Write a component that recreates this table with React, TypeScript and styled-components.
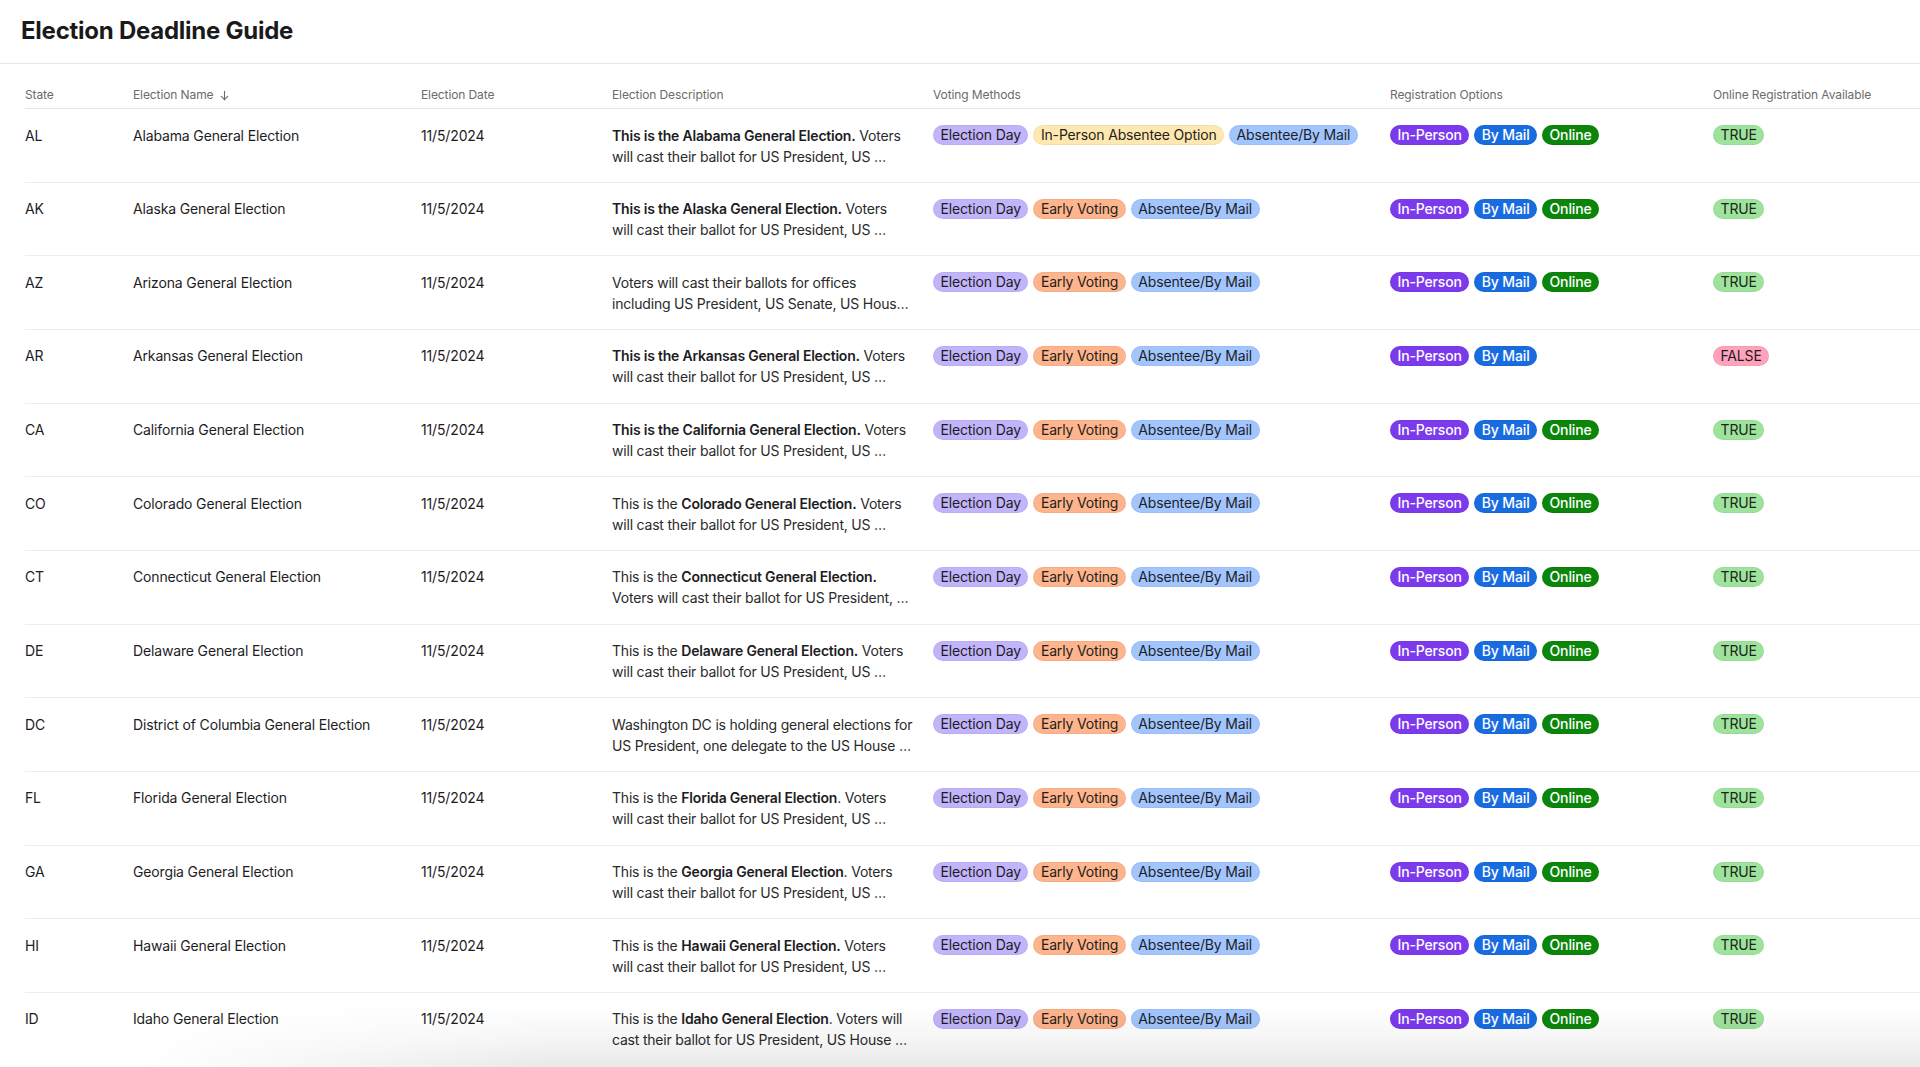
import React from "react";
import styled, { createGlobalStyle } from "styled-components";

const GlobalStyle = createGlobalStyle`
  html, body {
    margin: 0;
    padding: 0;
    background: #ffffff;
    overflow: hidden;
  }
  body {
    font-family: Inter, "Noto Sans", "Liberation Sans", sans-serif;
    color: #1d1d1f;
    -webkit-font-smoothing: antialiased;
  }
  * { box-sizing: border-box; }
`;

const Page = styled.div`
  width: 1920px;
  height: 1067px;
  overflow: hidden;
  position: relative;
  background: #fff;
`;

const TitleBar = styled.header`
  height: 64px;
  padding: 17px 21px 0;
  border-bottom: 1px solid #e6e6e6;
`;

const Title = styled.h1`
  margin: 0;
  font-size: 24px;
  line-height: 28px;
  font-weight: 700;
  letter-spacing: -0.25px;
  color: #1a1a1a;
`;

const Table = styled.div`
  margin: 20px 0 0 25px;
`;

const cols = "108px 288px 191px 321px 457px 323px 1fr";

const HeaderRow = styled.div`
  display: grid;
  grid-template-columns: ${cols};
  padding: 3px 0 5px;
  border-bottom: 1px solid #e6e6e6;
`;

const HeaderCell = styled.div`
  display: flex;
  align-items: center;
  gap: 6px;
  font-size: 12px;
  line-height: 16px;
  letter-spacing: -0.1px;
  color: #6b6b6b;
`;

const Row = styled.div`
  display: grid;
  grid-template-columns: ${cols};
  padding: 15.5px 0 15.17px;
  border-bottom: 1px solid #ececec;
  &:last-child {
    border-bottom-color: transparent;
  }
`;

const Cell = styled.div`
  font-size: 14px;
  line-height: 21px;
  letter-spacing: -0.15px;
  color: #1d1d1f;
  padding-right: 6px;
`;

const DescLine = styled.div`
  white-space: nowrap;
  font-size: 14px;
  line-height: 21px;
  letter-spacing: -0.2px;
  color: #2a2a2a;
`;

const Strong = styled.b`
  font-weight: 600;
  color: #1d1d1f;
`;

const PillGroup = styled.div`
  display: flex;
  flex-wrap: wrap;
  gap: 5px;
  padding-top: 0.5px;
`;

const Pill = styled.span<{ $bg: string; $fg: string; $weight?: number }>`
  display: inline-flex;
  align-items: center;
  height: 20px;
  padding: 0 7.5px;
  border-radius: 10px;
  background: ${(p) => p.$bg};
  color: ${(p) => p.$fg};
  font-size: 14px;
  line-height: 20px;
  letter-spacing: -0.15px;
  font-weight: ${(p) => p.$weight ?? 400};
  box-shadow: inset 0 0 0 1px rgba(0, 0, 0, 0.04);
  white-space: nowrap;
`;

const BottomFade = styled.div`
  position: fixed;
  left: 0;
  right: 0;
  bottom: 0;
  height: 62px;
  pointer-events: none;
  background: linear-gradient(to bottom, rgba(0, 0, 0, 0) 0%, rgba(0, 0, 0, 0.04) 55%, rgba(0, 0, 0, 0.09) 100%);
  -webkit-mask-image: linear-gradient(to right, transparent 130px, #000 560px);
  mask-image: linear-gradient(to right, transparent 130px, #000 560px);
`;

const SortArrow = () => (
  <svg width="11" height="11" viewBox="0 0 12 12" fill="none" stroke="#6b6b6b" strokeWidth="1.2" strokeLinecap="round" strokeLinejoin="round">
    <path d="M6 1.5v9" />
    <path d="M2.5 7l3.5 3.5L9.5 7" />
  </svg>
);

type PillKind =
  | "Election Day"
  | "Early Voting"
  | "In-Person Absentee Option"
  | "Absentee/By Mail"
  | "In-Person"
  | "By Mail"
  | "Online"
  | "TRUE"
  | "FALSE";

const pillStyles: Record<PillKind, { bg: string; fg: string; weight?: number }> = {
  "Election Day": { bg: "#c2b4fb", fg: "#1c1c22" },
  "Early Voting": { bg: "#feb48d", fg: "#241e1a" },
  "In-Person Absentee Option": { bg: "#fee8b2", fg: "#24211a" },
  "Absentee/By Mail": { bg: "#a3c5fd", fg: "#1a1f2a" },
  "In-Person": { bg: "#7c3aed", fg: "#ffffff", weight: 500 },
  "By Mail": { bg: "#186ce0", fg: "#ffffff", weight: 500 },
  Online: { bg: "#0b860b", fg: "#ffffff", weight: 500 },
  TRUE: { bg: "#9ee39c", fg: "#1c241c" },
  FALSE: { bg: "#ffa3bc", fg: "#241c1e" },
};

const Tag = ({ kind }: { kind: PillKind }) => {
  const s = pillStyles[kind];
  return (
    <Pill $bg={s.bg} $fg={s.fg} $weight={s.weight}>
      {kind}
    </Pill>
  );
};

type Seg = string | { b: string };

interface Election {
  state: string;
  name: string;
  l1: Seg[];
  l2: string;
  methods: PillKind[];
  reg: PillKind[];
  online: PillKind;
}

const std: PillKind[] = ["Election Day", "Early Voting", "Absentee/By Mail"];
const regAll: PillKind[] = ["In-Person", "By Mail", "Online"];
const l2std = "will cast their ballot for US President, US …";

const data: Election[] = [
  { state: "AL", name: "Alabama General Election", l1: [{ b: "This is the Alabama General Election." }, " Voters"], l2: l2std, methods: ["Election Day", "In-Person Absentee Option", "Absentee/By Mail"], reg: regAll, online: "TRUE" },
  { state: "AK", name: "Alaska General Election", l1: [{ b: "This is the Alaska General Election." }, " Voters"], l2: l2std, methods: std, reg: regAll, online: "TRUE" },
  { state: "AZ", name: "Arizona General Election", l1: ["Voters will cast their ballots for offices"], l2: "including US President, US Senate, US Hous…", methods: std, reg: regAll, online: "TRUE" },
  { state: "AR", name: "Arkansas General Election", l1: [{ b: "This is the Arkansas General Election." }, " Voters"], l2: l2std, methods: std, reg: ["In-Person", "By Mail"], online: "FALSE" },
  { state: "CA", name: "California General Election", l1: [{ b: "This is the California General Election." }, " Voters"], l2: l2std, methods: std, reg: regAll, online: "TRUE" },
  { state: "CO", name: "Colorado General Election", l1: ["This is the ", { b: "Colorado General Election." }, " Voters"], l2: l2std, methods: std, reg: regAll, online: "TRUE" },
  { state: "CT", name: "Connecticut General Election", l1: ["This is the ", { b: "Connecticut General Election." }], l2: "Voters will cast their ballot for US President, …", methods: std, reg: regAll, online: "TRUE" },
  { state: "DE", name: "Delaware General Election", l1: ["This is the ", { b: "Delaware General Election." }, " Voters"], l2: l2std, methods: std, reg: regAll, online: "TRUE" },
  { state: "DC", name: "District of Columbia General Election", l1: ["Washington DC is holding general elections for"], l2: "US President, one delegate to the US House …", methods: std, reg: regAll, online: "TRUE" },
  { state: "FL", name: "Florida General Election", l1: ["This is the ", { b: "Florida General Election" }, ". Voters"], l2: l2std, methods: std, reg: regAll, online: "TRUE" },
  { state: "GA", name: "Georgia General Election", l1: ["This is the ", { b: "Georgia General Election" }, ". Voters"], l2: l2std, methods: std, reg: regAll, online: "TRUE" },
  { state: "HI", name: "Hawaii General Election", l1: ["This is the ", { b: "Hawaii General Election." }, " Voters"], l2: l2std, methods: std, reg: regAll, online: "TRUE" },
  { state: "ID", name: "Idaho General Election", l1: ["This is the ", { b: "Idaho General Election" }, ". Voters will"], l2: "cast their ballot for US President, US House …", methods: std, reg: regAll, online: "TRUE" },
];

const headers = [
  "State",
  "Election Name",
  "Election Date",
  "Election Description",
  "Voting Methods",
  "Registration Options",
  "Online Registration Available",
];

export default function App() {
  return (
    <>
      <GlobalStyle />
      <Page>
        <TitleBar>
          <Title>Election Deadline Guide</Title>
        </TitleBar>
        <Table>
          <HeaderRow>
            {headers.map((h) => (
              <HeaderCell key={h}>
                {h}
                {h === "Election Name" && <SortArrow />}
              </HeaderCell>
            ))}
          </HeaderRow>
          {data.map((r) => (
            <Row key={r.state}>
              <Cell>{r.state}</Cell>
              <Cell>{r.name}</Cell>
              <Cell>11/5/2024</Cell>
              <Cell>
                <DescLine>
                  {r.l1.map((s, i) =>
                    typeof s === "string" ? <React.Fragment key={i}>{s}</React.Fragment> : <Strong key={i}>{s.b}</Strong>
                  )}
                </DescLine>
                <DescLine>{r.l2}</DescLine>
              </Cell>
              <Cell>
                <PillGroup>
                  {r.methods.map((m) => (
                    <Tag key={m} kind={m} />
                  ))}
                </PillGroup>
              </Cell>
              <Cell>
                <PillGroup>
                  {r.reg.map((m) => (
                    <Tag key={m} kind={m} />
                  ))}
                </PillGroup>
              </Cell>
              <Cell>
                <PillGroup>
                  <Tag kind={r.online} />
                </PillGroup>
              </Cell>
            </Row>
          ))}
        </Table>
        <BottomFade />
      </Page>
    </>
  );
}
